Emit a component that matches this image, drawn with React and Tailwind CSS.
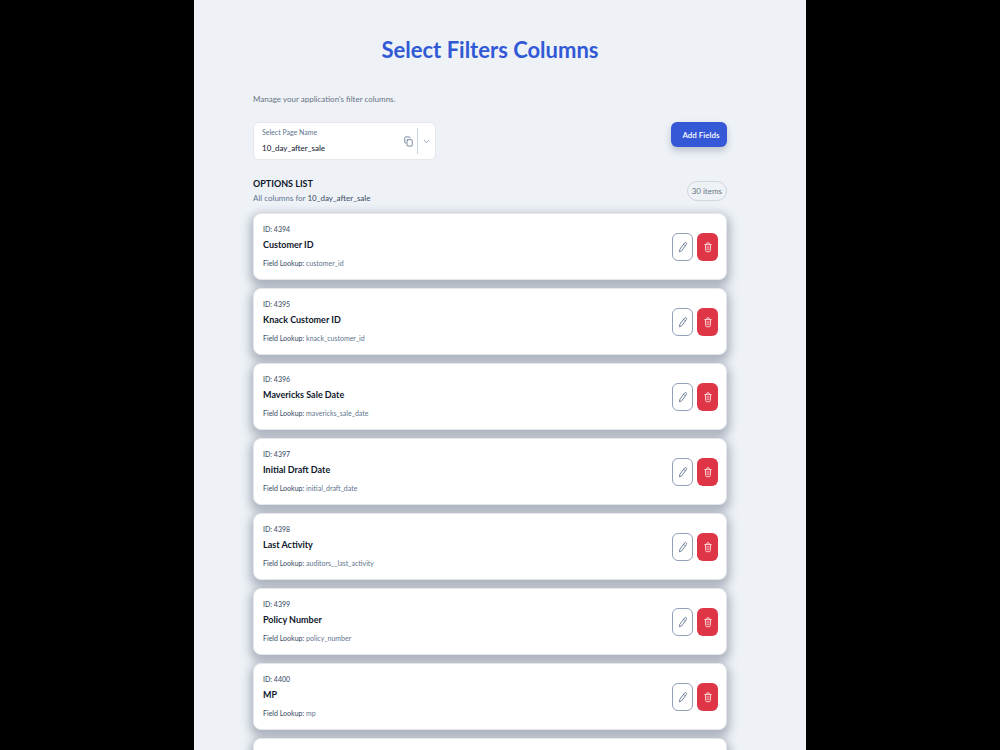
import React, { useRef, useState } from "react";
import { ChevronDown, Copy } from "lucide-react";

const PAGES = ["10_day_after_sale"];

const COLUMNS = [
  { id: 4394, name: "Customer ID", lookup: "customer_id" },
  { id: 4395, name: "Knack Customer ID", lookup: "knack_customer_id" },
  { id: 4396, name: "Mavericks Sale Date", lookup: "mavericks_sale_date" },
  { id: 4397, name: "Initial Draft Date", lookup: "initial_draft_date" },
  { id: 4398, name: "Last Activity", lookup: "auditors__last_activity" },
  { id: 4399, name: "Policy Number", lookup: "policy_number" },
  { id: 4400, name: "MP", lookup: "mp" },
];

const TOTAL = 30;

const CARD = "rounded-lg border border-gray-200 bg-white h-[67px] shadow-[0_4px_10px_3px_rgba(75,85,105,0.4)]";

function PencilIcon() {
  return (
    <svg viewBox="0 0 10 14" className="w-[10px] h-[14px]" fill="none" stroke="currentColor" strokeWidth="0.9" strokeLinejoin="round" aria-hidden="true">
      <path d="M1.4 11.8 1.9 9.2 6.5 3Q7.4 2 8.2 2.8 9 3.6 8.3 4.6L3.7 10.8 1.4 11.8ZM5.6 4.2 7.3 5.9" />
    </svg>
  );
}

function TrashIcon() {
  return (
    <svg viewBox="0 0 10 14" className="w-[10px] h-[14px]" fill="none" stroke="currentColor" strokeWidth="0.9" strokeLinecap="round" strokeLinejoin="round" aria-hidden="true">
      <path d="M1.8 4.6h6.4M3.4 4.4Q3.4 2.6 5 2.6t1.6 1.8M2.4 4.8l.3 5.8q.1 1.1 1 1.1h2.6q.9 0 1-1.1l.3-5.8M4 7h2M4 9.2h2" />
    </svg>
  );
}

function ColumnCard({ column }) {
  return (
    <li className={`flex items-center justify-between pl-[9px] pr-2 ${CARD}`}>
      <div>
        <p className="text-[7px] leading-[10px] font-medium text-slate-600">ID: {column.id}</p>
        <h3 className="mt-1 text-[9px] leading-[14px] font-bold text-slate-900">{column.name}</h3>
        <p className="mt-1 text-[7px] leading-[14px] text-slate-500">
          <span className="font-medium text-slate-600">Field Lookup:</span> <span>{column.lookup}</span>
        </p>
      </div>
      <div className="flex gap-1">
        <button aria-label={`Edit ${column.name}`} className="flex items-center justify-center w-[21px] h-7 rounded-md border border-slate-400 bg-white text-slate-500">
          <PencilIcon />
        </button>
        <button aria-label={`Delete ${column.name}`} className="flex items-center justify-center w-[21px] h-7 rounded-md bg-[#de3647] text-red-100">
          <TrashIcon />
        </button>
      </div>
    </li>
  );
}

export default function App() {
  const [page, setPage] = useState(PAGES[0]);
  const selectRef = useRef(null);

  return (
    <div className="h-screen overflow-hidden bg-black font-['Lato',sans-serif]">
      <main className="mx-auto w-[61.2%] min-h-full bg-[#eef2f7] pl-[59px] pr-[79px] pt-8">
        <h1 className="text-center text-[22px] leading-9 font-bold text-[#3159d6]">Select Filters Columns</h1>
        <p className="mt-6 text-[8px] leading-[14px] text-gray-500">Manage your application's filter columns.</p>

        <div className="mt-4 flex items-start justify-between">
          <div className="flex items-center w-[183px] h-[38px] rounded-md border border-gray-200 bg-white">
            <div className="flex-1 pl-2">
              <label htmlFor="page-name" className="block text-[7px] leading-[10px] text-slate-500">Select Page Name</label>
              <select
                id="page-name"
                ref={selectRef}
                value={page}
                onChange={(e) => setPage(e.target.value)}
                className="mt-1 block w-full appearance-none bg-transparent text-[8px] leading-[14px] font-medium text-slate-800 outline-none"
              >
                {PAGES.map((p) => (
                  <option key={p} value={p}>{p}</option>
                ))}
              </select>
            </div>
            <button aria-label="Copy page name" onClick={() => navigator.clipboard?.writeText(page)} className="px-1 text-slate-500">
              <Copy className="w-[9px] h-[11px]" preserveAspectRatio="none" />
            </button>
            <span className="h-[26px] w-px bg-slate-300" />
            <button aria-label="Open page list" onClick={() => selectRef.current?.showPicker?.()} className="px-1 text-slate-400">
              <ChevronDown className="w-[9px] h-[11px]" preserveAspectRatio="none" />
            </button>
          </div>
          <button className="h-[25px] w-14 rounded-md bg-[#3558d6] pl-1 text-[8px] font-semibold text-white shadow-[0_4px_7px_rgba(75,85,105,0.3)]">
            Add Fields
          </button>
        </div>

        <div className="mt-[17px] flex items-center justify-between">
          <div>
            <h2 className="text-[9px] leading-[14px] font-bold text-slate-900">OPTIONS LIST</h2>
            <p className="text-[8px] leading-[14px] text-slate-500">
              All columns for <span className="font-medium text-slate-600">{page}</span>
            </p>
          </div>
          <span className="flex h-5 items-center rounded-full border border-gray-300 px-1 text-[8px] text-gray-500">{TOTAL} items</span>
        </div>

        <ul className="mt-2 flex flex-col gap-2">
          {COLUMNS.map((column) => (
            <ColumnCard key={column.id} column={column} />
          ))}
          <li className={CARD} aria-hidden="true" />
        </ul>
      </main>
    </div>
  );
}
